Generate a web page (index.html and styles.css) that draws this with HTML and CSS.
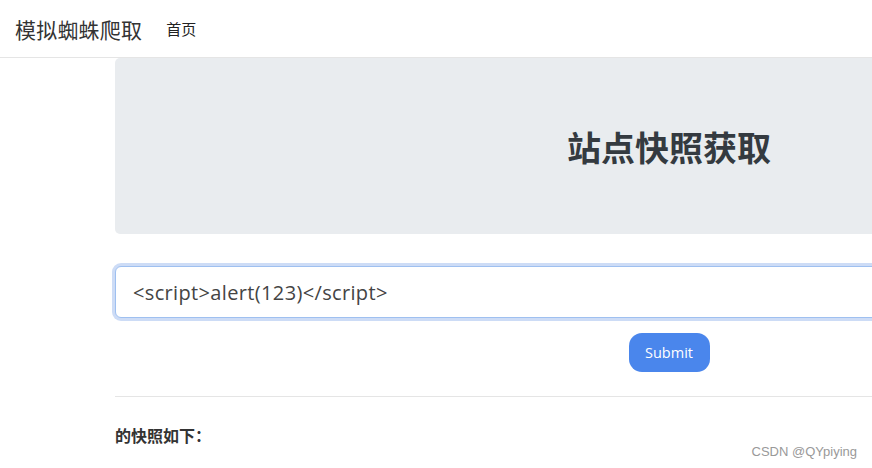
FILE: index.html
```html
<!DOCTYPE html>
<html lang="zh">
<head>
<meta charset="utf-8">
<title>模拟蜘蛛爬取</title>
<link rel="stylesheet" href="styles.css">
</head>
<body>
<nav class="navbar">
  <a class="brand">模拟蜘蛛爬取</a>
  <a class="nav-link">首页</a>
</nav>
<main class="container">
  <section class="jumbotron">
    <h1 class="title">站点快照获取</h1>
  </section>
  <form class="form">
    <input class="url-input" type="text" value="<script>alert(123)</script>">
    <button class="submit" type="button">Submit</button>
  </form>
  <hr class="divider">
  <p class="result">的快照如下：</p>
</main>
<div class="watermark">CSDN @QYpiying</div>
</body>
</html>
```
FILE: styles.css
```css
* { box-sizing: border-box; }
html, body {
  margin: 0;
  padding: 0;
  overflow: hidden;
  width: 872px;
  height: 468px;
  background: #fff;
  font-family: "Noto Sans CJK SC", "Open Sans", sans-serif;
  color: #333;
}
.navbar {
  display: flex;
  align-items: center;
  height: 58px;
  padding: 0 15px;
  border-bottom: 1px solid #e5e5e5;
  gap: 24px;
}
.brand {
  font-size: 21px;
  color: #333;
  letter-spacing: 0.2px;
}
.nav-link {
  font-size: 15px;
  color: #222;
}
.container {
  width: 1108px;
  margin-left: 115px;
}
.jumbotron {
  height: 176px;
  background: #e9ecef;
  border-radius: 5px;
  display: flex;
  align-items: center;
  justify-content: center;
}
.title {
  margin: 0;
  font-size: 34px;
  font-weight: 700;
  color: #343a40;
}
.form {
  margin-top: 32px;
  display: flex;
  flex-direction: column;
  align-items: center;
}
.url-input {
  width: 100%;
  height: 52px;
  padding: 0 17px;
  font-family: "Open Sans", "Noto Sans", sans-serif;
  font-size: 20px;
  letter-spacing: 0.35px;
  color: #444;
  border: 1px solid #9fc0f0;
  border-radius: 6px;
  box-shadow: 0 0 0 3px #cddcf6;
  outline: none;
}
.submit {
  margin-top: 15px;
  width: 81px;
  height: 39px;
  border: none;
  border-radius: 13px;
  background: #4a86ec;
  color: #fff;
  font-family: "Open Sans", "Noto Sans", sans-serif;
  font-size: 14.5px;
}
.divider {
  margin: 24px 0 0;
  border: 0;
  border-top: 1px solid #e5e5e5;
}
.result {
  margin: 26px 0 0;
  font-size: 16px;
  font-weight: 700;
  color: #333;
}
.watermark {
  position: absolute;
  right: 15px;
  bottom: 9px;
  font-family: "Liberation Sans", sans-serif;
  font-size: 13px;
  color: #999;
}
```
